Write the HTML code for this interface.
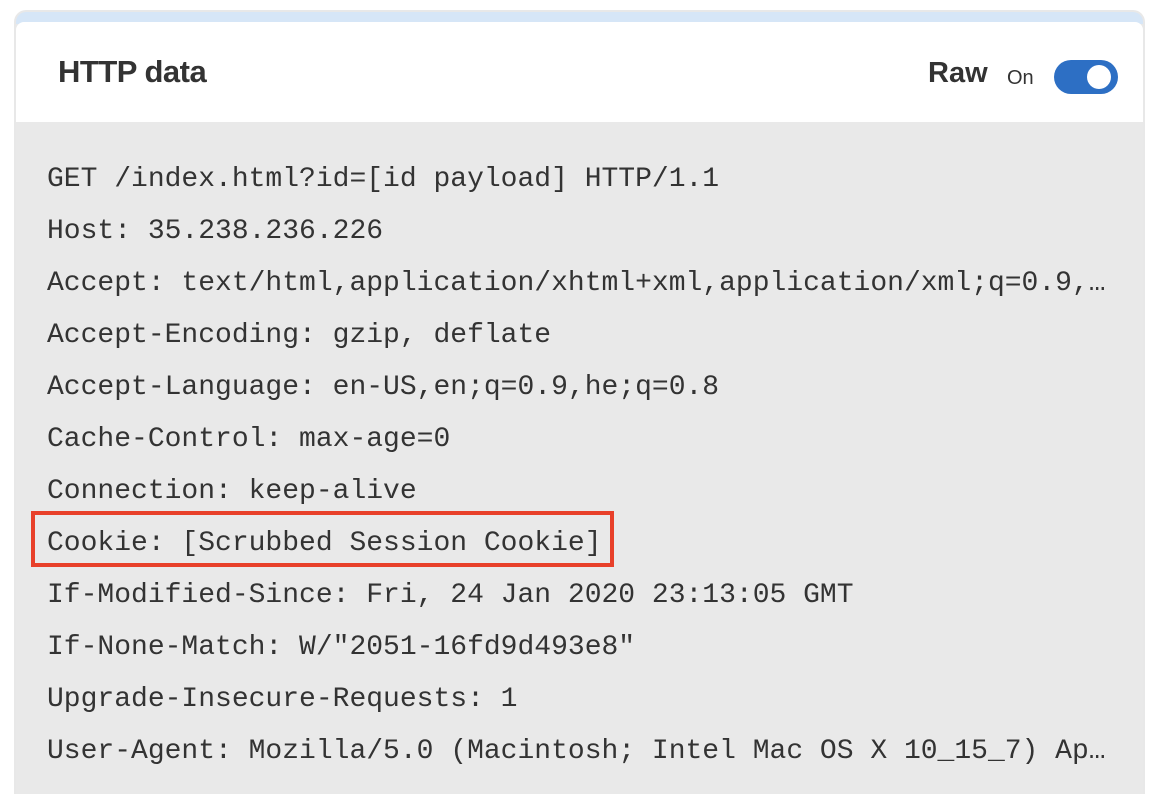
<!DOCTYPE html>
<html><head><meta charset="utf-8"><style>
html,body{margin:0;padding:0;background:#fff;width:1158px;height:794px;overflow:hidden}
.card{position:absolute;left:14px;top:10px;width:1131px;height:784px;border:2px solid #e8e8e8;border-bottom:none;border-radius:12px 12px 0 0;overflow:hidden;box-sizing:border-box;background:#e9e9e9}
.strip{position:absolute;left:0;top:0;right:0;height:12px;background:#d6e6f7}
.head{position:absolute;left:0;top:10px;right:0;height:100px;background:#fff;border-radius:8px 8px 0 0}
.title{position:absolute;left:42px;top:34px;font:600 31px/1 "Liberation Sans",sans-serif;color:#333;letter-spacing:-0.5px}
.raw{position:absolute;left:912px;top:37px;font:600 29px/1 "Liberation Sans",sans-serif;color:#333}
.on{position:absolute;left:991px;top:46px;font:20px/1 "Liberation Sans",sans-serif;color:#333}
.tog{position:absolute;left:1038px;top:38px;width:64px;height:34px;border-radius:17px;background:#2d6fc4}
.tog i{position:absolute;right:7px;top:5px;width:24px;height:24px;border-radius:50%;background:#fff}
.lines{position:absolute;left:31px;top:142px;font:28px/52px "Liberation Mono",monospace;color:#333;white-space:pre}
.box{position:absolute;left:15px;top:499px;width:583px;height:56px;border:4px solid #e8402a;box-sizing:border-box}
</style></head><body>
<div class="card">
<div class="strip"></div>
<div class="head">
<div class="title">HTTP data</div>
<div class="raw">Raw</div>
<div class="on">On</div>
<div class="tog"><i></i></div>
</div>
<div class="box"></div>
<div class="lines">GET /index.html?id=[id payload] HTTP/1.1
Host: 35.238.236.226
Accept: text/html,application/xhtml+xml,application/xml;q=0.9,…
Accept-Encoding: gzip, deflate
Accept-Language: en-US,en;q=0.9,he;q=0.8
Cache-Control: max-age=0
Connection: keep-alive
Cookie: [Scrubbed Session Cookie]
If-Modified-Since: Fri, 24 Jan 2020 23:13:05 GMT
If-None-Match: W/"2051-16fd9d493e8"
Upgrade-Insecure-Requests: 1
User-Agent: Mozilla/5.0 (Macintosh; Intel Mac OS X 10_15_7) Ap…</div>
</div>
</body></html>
